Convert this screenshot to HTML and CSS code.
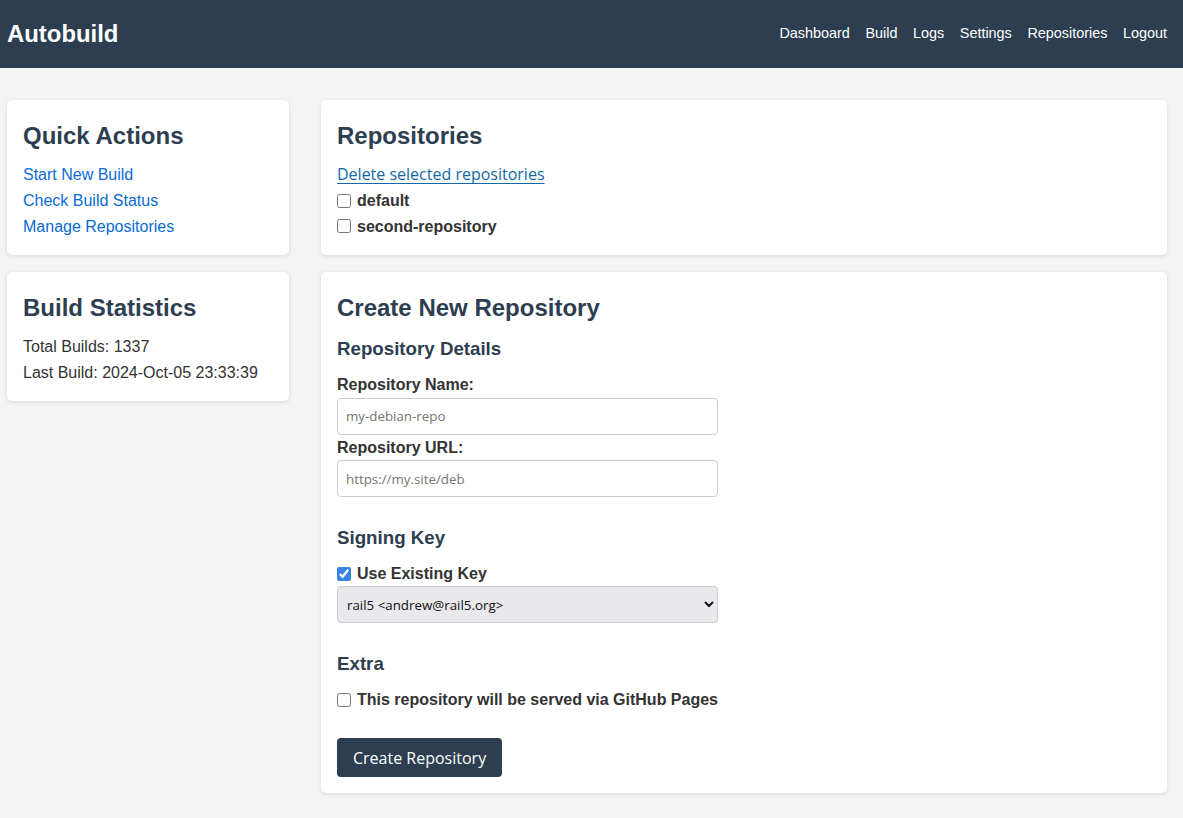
FILE: index.html
```html
<!DOCTYPE html>
<html lang="en">
<head>
<meta charset="utf-8">
<title>Autobuild</title>
<link rel="stylesheet" href="styles.css">
</head>
<body>
<header class="topbar">
  <div class="brand">Autobuild</div>
  <nav class="nav">
    <a href="#">Dashboard</a>
    <a href="#">Build</a>
    <a href="#">Logs</a>
    <a href="#">Settings</a>
    <a href="#">Repositories</a>
    <a href="#">Logout</a>
  </nav>
</header>
<div class="layout">
  <aside class="sidebar">
    <section class="card">
      <h2>Quick Actions</h2>
      <ul class="links">
        <li><a href="#">Start New Build</a></li>
        <li><a href="#">Check Build Status</a></li>
        <li><a href="#">Manage Repositories</a></li>
      </ul>
    </section>
    <section class="card">
      <h2>Build Statistics</h2>
      <p class="stat">Total Builds: 1337</p>
      <p class="stat">Last Build: 2024-Oct-05 23:33:39</p>
    </section>
  </aside>
  <main class="main">
    <section class="card">
      <h2>Repositories</h2>
      <button class="linkbtn" type="button">Delete selected repositories</button>
      <label class="check"><input type="checkbox"><span>default</span></label>
      <label class="check"><input type="checkbox"><span>second-repository</span></label>
    </section>
    <section class="card">
      <h2>Create New Repository</h2>
      <div class="group">
        <h3>Repository Details</h3>
        <label class="field-label" for="rname">Repository Name:</label>
        <input class="text-input" id="rname" type="text" placeholder="my-debian-repo">
        <label class="field-label" for="rurl">Repository URL:</label>
        <input class="text-input" id="rurl" type="text" placeholder="https://my.site/deb">
      </div>
      <div class="group">
        <h3>Signing Key</h3>
        <label class="check"><input type="checkbox" checked><span>Use Existing Key</span></label>
        <select class="select-input">
          <option>rail5 &lt;andrew@rail5.org&gt;</option>
        </select>
      </div>
      <div class="group">
        <h3>Extra</h3>
        <label class="check"><input type="checkbox"><span>This repository will be served via GitHub Pages</span></label>
      </div>
      <button class="primary" type="button">Create Repository</button>
    </section>
  </main>
</div>
</body>
</html>
```

FILE: styles.css
```css
* { box-sizing: border-box; }
html, body { margin: 0; padding: 0; }
body {
  background: #f4f4f4;
  font-family: "Liberation Sans", Arial, sans-serif;
  font-size: 16px;
  line-height: 1.6;
  color: #333;
}
.topbar {
  background: #2c3e50;
  height: 68px;
  display: flex;
  align-items: center;
  justify-content: space-between;
  padding: 0 16px 0 8px;
  color: #fff;
}
.brand {
  font-family: "Liberation Sans", Arial, sans-serif;
  font-weight: 700;
  font-size: 23.9px;
  line-height: 1;
  margin-left: -1px;
}
.nav {
  display: flex;
  gap: 15.6px;
}
.nav a {
  color: #fff;
  text-decoration: none;
  font-size: 14.4px;
}
.layout {
  display: grid;
  grid-template-columns: 282px 1fr;
  gap: 32px;
  padding: 32px 16px 16px 7px;
  align-items: start;
}
.sidebar, .main {
  display: flex;
  flex-direction: column;
  gap: 16.5px;
}
.card {
  background: #fff;
  border-radius: 5px;
  box-shadow: 0 1px 4px rgba(0,0,0,0.12);
  padding: 16px;
  display: flex;
  flex-direction: column;
  align-items: flex-start;
}
h2 {
  margin: 0 0 6.4px;
  font-size: 24px;
  line-height: 40px;
  color: #2c3e50;
}
h3 {
  margin: 0 0 8px;
  font-size: 18.72px;
  line-height: 30px;
  color: #2c3e50;
}
.links {
  list-style: none;
  margin: 0;
  padding: 0;
}
.links a {
  color: #0a6bd6;
  text-decoration: none;
}
.stat { margin: 0; }
.linkbtn {
  background: none;
  border: 0;
  padding: 0;
  margin: 0;
  font-family: "Open Sans", "Noto Sans", sans-serif;
  font-size: 16px;
  line-height: 25.6px;
  color: #1168a6;
  text-decoration: underline;
  text-underline-offset: 3px;
  cursor: pointer;
}
.check {
  display: flex;
  align-items: center;
  gap: 6px;
  font-weight: 700;
  line-height: 25.6px;
}
.check input {
  margin: 0;
  width: 14px;
  height: 14px;
  accent-color: #3584e4;
}
.group {
  display: flex;
  flex-direction: column;
  align-items: flex-start;
  width: 100%;
  margin-bottom: 26px;
}
.group .check { line-height: 25px; }
.field-label {
  font-weight: 700;
  line-height: 25.6px;
}
.text-input, .select-input {
  width: 381px;
  height: 37px;
  border: 1px solid #ccc;
  border-radius: 4px;
  padding: 0 8px;
  font-family: "Open Sans", "Noto Sans", sans-serif;
  font-size: 13.33px;
  color: #222;
  background: #fff;
}
.text-input::placeholder { color: #757575; }
.select-input {
  background: #e9e9ed;
  color: #111;
  padding: 0 5px;
}
.primary {
  margin-top: 0;
  height: 39px;
  padding: 0 16px;
  background: #2c3e50;
  color: #fff;
  border: 0;
  border-radius: 4px;
  font-family: "Open Sans", "Noto Sans", sans-serif;
  font-size: 16px;
  cursor: pointer;
}
```
